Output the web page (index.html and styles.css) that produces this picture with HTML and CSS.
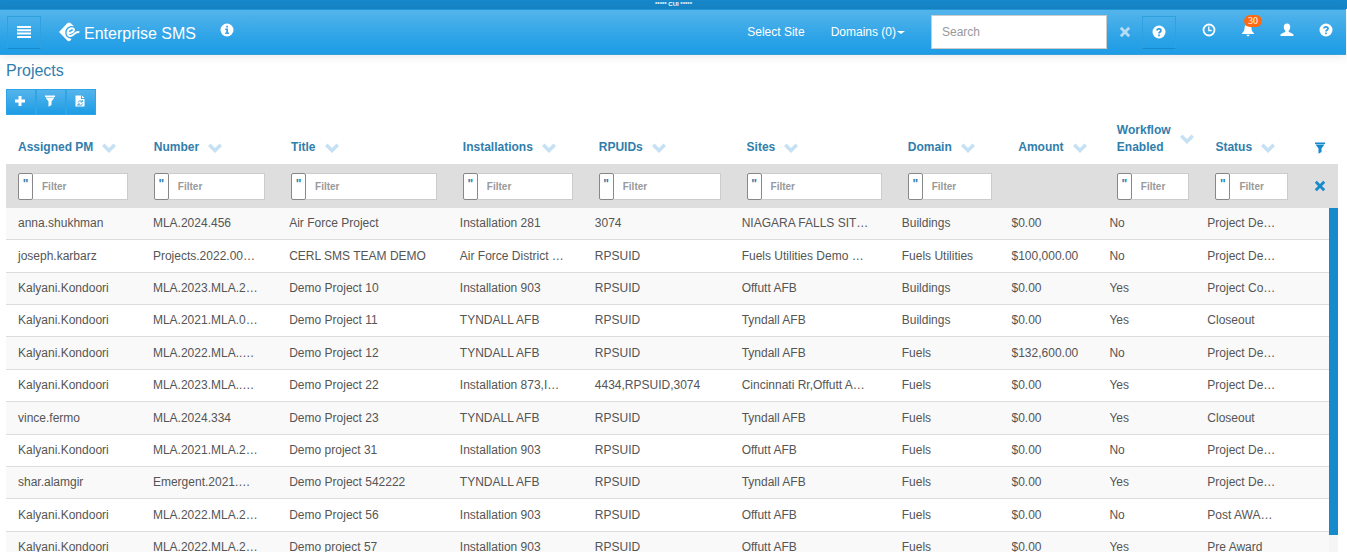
FILE: index.html
```html
<!DOCTYPE html>
<html lang="en">
<head>
<meta charset="utf-8">
<title>Enterprise SMS - Projects</title>
<link rel="stylesheet" href="styles.css">
</head>
<body>
<svg class="sprite" aria-hidden="true">
  <symbol id="i-help" viewBox="0 0 14 14"><circle cx="7" cy="7" r="6.5" fill="currentColor"/><path d="M5 5.6C5 3.2 9 3.2 9 5.5C9 7 7 7 7 8.5M7 9.6v1.6" fill="none" stroke="#2f9ee0" stroke-width="1.7"/></symbol>
  <symbol id="i-info" viewBox="0 0 14 14"><circle cx="7" cy="7" r="6.5" fill="currentColor"/><path d="M6.2 2.8h1.8v1.7H6.200zM5.200 5.600h2.800v4h1v1.400H5.200V9.600h1V7h-1z" fill="#3aa4e3"/></symbol>
  <symbol id="i-clock" viewBox="0 0 14 14"><circle cx="7" cy="7" r="5.500" fill="none" stroke="currentColor" stroke-width="1.800"/><path d="M6.800 3.500v4h3" fill="none" stroke="currentColor" stroke-width="1.300"/></symbol>
  <symbol id="i-bell" viewBox="0 0 14 14"><path d="M6.200 1a.8.8 0 0 1 1.600 0C10 1.600 10.400 3.500 10.500 5.500c.1 2.500 1 3.500 2.500 4.700v.8H1v-.8C2.500 9 3.400 8 3.500 5.500 3.600 3.500 4 1.600 6.200 1zM5.500 11.800h3a1.500 1.500 0 0 1-3 0z" fill="currentColor"/></symbol>
  <symbol id="i-user" viewBox="0 0 14 14"><path d="M7 .5c2.200 0 3.200 1.500 3.200 3.500 0 1.800-.7 3-1.500 3.800v1.200c1.800.8 4.800 1.500 4.800 3.200V13H.5v-.8C.5 10.500 3.500 9.800 5.300 9V7.800C4.500 7 3.800 5.800 3.800 4 3.800 2 4.800.5 7 .5z" fill="currentColor"/></symbol>
  <symbol id="i-remove" viewBox="0 0 12 12"><path d="M2.800.8L6 4 9.200.8l2 2L8 6l3.200 3.200-2 2L6 8l-3.200 3.200-2-2L4 6 .8 2.800z" fill="currentColor"/></symbol>
  <symbol id="i-plus" viewBox="0 0 12 12"><path d="M4.500 1h3v3.500H11v3H7.500V11h-3V7.500H1v-3h3.500z" fill="currentColor"/></symbol>
  <symbol id="i-filter" viewBox="0 0 12 12"><path d="M1 .5h10v1.500H1zM1.500 2.600h9L7.500 6.500V10L4.500 11.800V6.500z" fill="currentColor"/></symbol>
  <symbol id="i-export" viewBox="0 0 12 12"><path d="M1.500.5h5.500v3.500h3.500v7.500h-9z" fill="currentColor"/><path d="M8 .5L10.500 3H8z" fill="currentColor"/><path d="M4 7.500a2.300 2.300 0 0 1 4-.8M8.500 8.500a2.300 2.300 0 0 1-4 1M8.300 5v2H6.500M4 11V9h2" fill="none" stroke="#2f9ee0" stroke-width=".9"/></symbol>
  <symbol id="i-down" viewBox="0 0 14 10"><path d="M2.500.5L7 5l4.500-4.500L14 3 7 10 0 3z" fill="currentColor"/></symbol>
  <symbol id="i-menu" viewBox="0 0 14 12"><path d="M0 0h14v2H0zM0 3.300h14v2H0zM0 6.600h14v2H0zM0 9.900h14v2H0z" fill="currentColor"/></symbol>
</svg>

<div class="banner">***** CUI *****</div>
<header class="navbar">
  <button class="nav-btn" aria-label="Menu"><svg class="menu-icon"><use href="#i-menu"/></svg></button>
  <a class="brand" href="#">
    <svg class="logo" viewBox="0 0 21 20"><path d="M0 10L8.500 1Q10 0 11.500 1L15 4.300C10 3.300 6.500 6 6.300 10.500 6.200 14 8.500 16.300 12.500 16.800L11.500 18.500Q10 20 8.500 18.700z" fill="#fff"/><path d="M9.500 11.200C13 11 15.300 9.200 15 7.500 14.600 5.300 8.800 6 8.600 10.800 8.500 14.500 12.500 15 15 12.200 16.500 10.300 18 9.400 20.300 10.200" fill="none" stroke="#fff" stroke-width="2"/></svg>
    <span class="brand-name">Enterprise SMS</span>
  </a>
  <a class="icon-link info" href="#" aria-label="Information"><svg class="icon"><use href="#i-info"/></svg></a>
  <nav class="nav-links">
    <a href="#">Select Site</a>
    <a href="#">Domains (0)<span class="caret"></span></a>
  </nav>
  <form class="search">
    <input type="text" placeholder="Search" aria-label="Search">
    <button type="button" class="nav-btn clear" aria-label="Clear search"><svg class="icon-s"><use href="#i-remove"/></svg></button>
    <button type="button" class="nav-btn" aria-label="Search help"><svg class="icon"><use href="#i-help"/></svg></button>
  </form>
  <div class="nav-icons">
    <a class="icon-link" href="#" aria-label="Recent"><svg class="icon"><use href="#i-clock"/></svg></a>
    <a class="icon-link" href="#" aria-label="Notifications"><svg class="icon"><use href="#i-bell"/></svg><span class="badge">30</span></a>
    <a class="icon-link" href="#" aria-label="Account"><svg class="icon"><use href="#i-user"/></svg></a>
    <a class="icon-link" href="#" aria-label="Help"><svg class="icon"><use href="#i-help"/></svg></a>
  </div>
</header>

<main>
  <h1>Projects</h1>
  <div class="toolbar">
    <button aria-label="Add"><svg class="icon-s"><use href="#i-plus"/></svg></button>
    <button aria-label="Filter"><svg class="icon-s"><use href="#i-filter"/></svg></button>
    <button aria-label="Export"><svg class="icon-s"><use href="#i-export"/></svg></button>
  </div>

  <table class="grid">
    <colgroup><col class="c-pm"><col class="c-number"><col class="c-title"><col class="c-inst"><col class="c-rpuid"><col class="c-sites"><col class="c-domain"><col class="c-small"><col class="c-small"><col class="c-small"><col class="c-tools"></colgroup>
    <thead>
      <tr class="heads" id="heads"></tr>
      <tr class="filters" id="filters"></tr>
    </thead>
  </table>
  <div class="scroller">
    <table class="grid">
      <colgroup><col class="c-pm"><col class="c-number"><col class="c-title"><col class="c-inst"><col class="c-rpuid"><col class="c-sites"><col class="c-domain"><col class="c-small"><col class="c-small"><col class="c-small"><col class="c-tools"></colgroup>
      <tbody id="rows"></tbody>
    </table>
    <div class="rail"><div class="thumb"></div></div>
  </div>
</main>
<script src="grid.js"></script>
</body>
</html>
```
FILE: grid.js
```js
const columns = ["Assigned PM", "Number", "Title", "Installations", "RPUIDs", "Sites", "Domain", "Amount", "Workflow Enabled", "Status"];
const unfiltered = ["Amount"];
const projects = [
  ["anna.shukhman", "MLA.2024.456", "Air Force Project", "Installation 281", "3074", "NIAGARA FALLS SIT…", "Buildings", "$0.00", "No", "Project De…"],
  ["joseph.karbarz", "Projects.2022.00…", "CERL SMS TEAM DEMO", "Air Force District …", "RPSUID", "Fuels Utilities Demo …", "Fuels Utilities", "$100,000.00", "No", "Project De…"],
  ["Kalyani.Kondoori", "MLA.2023.MLA.2…", "Demo Project 10", "Installation 903", "RPSUID", "Offutt AFB", "Buildings", "$0.00", "Yes", "Project Co…"],
  ["Kalyani.Kondoori", "MLA.2021.MLA.0…", "Demo Project 11", "TYNDALL AFB", "RPSUID", "Tyndall AFB", "Buildings", "$0.00", "Yes", "Closeout"],
  ["Kalyani.Kondoori", "MLA.2022.MLA..…", "Demo Project 12", "TYNDALL AFB", "RPSUID", "Tyndall AFB", "Fuels", "$132,600.00", "No", "Project De…"],
  ["Kalyani.Kondoori", "MLA.2023.MLA..…", "Demo Project 22", "Installation 873,I…", "4434,RPSUID,3074", "Cincinnati Rr,Offutt A…", "Fuels", "$0.00", "Yes", "Project De…"],
  ["vince.fermo", "MLA.2024.334", "Demo Project 23", "TYNDALL AFB", "RPSUID", "Tyndall AFB", "Fuels", "$0.00", "Yes", "Closeout"],
  ["Kalyani.Kondoori", "MLA.2021.MLA.2…", "Demo project 31", "Installation 903", "RPSUID", "Offutt AFB", "Fuels", "$0.00", "No", "Project De…"],
  ["shar.alamgir", "Emergent.2021.…", "Demo Project 542222", "TYNDALL AFB", "RPSUID", "Tyndall AFB", "Fuels", "$0.00", "Yes", "Project De…"],
  ["Kalyani.Kondoori", "MLA.2022.MLA.2…", "Demo Project 56", "Installation 903", "RPSUID", "Offutt AFB", "Fuels", "$0.00", "No", "Post AWA…"],
  ["Kalyani.Kondoori", "MLA.2022.MLA.2…", "Demo project 57", "Installation 903", "RPSUID", "Offutt AFB", "Fuels", "$0.00", "Yes", "Pre Award"]
];

document.getElementById("heads").innerHTML = columns.map(name =>
  `<th scope="col"><div class="head"><a href="#">${name}</a><svg class="sort"><use href="#i-down"/></svg></div></th>`
).join("") + `<th class="tools"><button aria-label="Toggle filters"><svg class="icon-s"><use href="#i-filter"/></svg></button></th>`;

document.getElementById("filters").innerHTML = columns.map(name =>
  unfiltered.includes(name) ? "<td></td>" :
  `<td><div class="filter"><button aria-label="${name} filter mode">"</button><input type="text" placeholder="Filter" aria-label="Filter ${name}"></div></td>`
).join("") + `<td class="tools"><button aria-label="Clear filters"><svg class="icon-s"><use href="#i-remove"/></svg></button></td>`;

document.getElementById("rows").innerHTML = projects.map(row =>
  `<tr>${row.map(value => `<td>${value}</td>`).join("")}<td></td></tr>`
).join("");
```
FILE: styles.css
```css
* { box-sizing: border-box; }

body {
  margin: 0;
  height: 100vh;
  overflow: hidden;
  display: flex;
  flex-direction: column;
  font: 12px/16px "Liberation Sans", Arial, sans-serif;
  color: #555;
  background: #fff;
}

a { color: inherit; text-decoration: none; }
button, input { font: inherit; margin: 0; padding: 0; }
button { border: 0; background: none; color: inherit; display: flex; align-items: center; justify-content: center; }

.sprite { display: none; }
.icon { display: block; width: 14px; height: 14px; }
.icon-s { display: block; width: 12px; height: 12px; }

.banner {
  flex: none;
  height: 9px;
  background: #1787c9;
  color: #fff;
  font-size: 6px;
  line-height: 8px;
  font-weight: bold;
  text-align: center;
}

.navbar {
  flex: none;
  height: 46px;
  margin-right: 1px;
  padding: 0 13px 0 7px;
  display: flex;
  align-items: center;
  color: #fff;
  background: linear-gradient(#54b4eb, #2fa4e7 60%, #1d9ce5);
  border-top: 1px solid #1d95d8;
  border-bottom: 1px solid #3a9fd8;
  box-shadow: 0 1px 10px rgba(0, 0, 0, .1);
}

.nav-btn { width: 34px; height: 33px; border: 1px solid #2fa0e0; border-bottom-color: #178acc; }
.nav-btn.clear { color: #b5dcf5; border-color: transparent; margin-left: 1px; }
.menu-icon { width: 14px; height: 12px; }
.brand { display: flex; align-items: center; gap: 4px; margin-left: 18px; font-size: 16px; line-height: 20px; }
.brand-name { padding-top: 4px; }
.logo { width: 21px; height: 20px; }
.icon-link { position: relative; display: block; }
.info { margin-left: 24px; padding-bottom: 4px; }
.nav-links { margin-left: auto; display: flex; gap: 26px; }
.caret { display: inline-block; margin-left: 1px; vertical-align: middle; border: 4px solid transparent; border-top: 3px solid #fff; border-bottom: 0; }
.search { display: flex; align-items: center; margin-left: 26px; }
.search input { width: 176px; height: 34px; padding: 0 10px; border: 1px solid #ccc; background: #fff; color: #555; }
input::placeholder { color: #999; opacity: 1; }
.nav-icons { display: flex; gap: 25px; margin-left: 26px; padding-bottom: 4px; }
.badge {
  position: absolute;
  left: 3px;
  top: -8px;
  width: 18px;
  height: 12px;
  border-radius: 6px;
  background: #ff6a10;
  font: 10px/12px "Liberation Serif", serif;
  text-align: center;
}

main { flex: 1; min-height: 0; display: flex; flex-direction: column; padding: 6px 9px 0 6px; }
h1 { margin: 0; font-size: 16px; line-height: 20px; font-weight: normal; color: #317eac; }
.toolbar { display: flex; margin-top: 8px; }
.toolbar button {
  width: 30px;
  height: 26px;
  padding: 0 2px 3px 0;
  color: #fff;
  background: linear-gradient(#54b4eb, #1d9ce5);
  border: 1px solid #2fa4e7;
}

.grid { width: 100%; table-layout: fixed; border-collapse: collapse; text-align: left; }
.c-pm, .c-inst { width: 10.2%; }
.c-number { width: 10.3%; }
.c-title { width: 12.9%; }
.c-rpuid { width: 11.1%; }
.c-sites { width: 12.1%; }
.c-domain { width: 8.3%; }
.c-small { width: 7.4%; }
.c-tools { width: 2.7%; }

.heads th { height: 49px; padding: 0 12px 8px; vertical-align: bottom; color: #317eac; line-height: 17px; }
.head { display: flex; align-items: center; gap: 9px; }
.sort { flex: none; width: 14px; height: 10px; color: #c5e1f3; }
.grid .tools { padding-left: 0; padding-right: 0; color: #178acc; }
.tools button { width: 100%; height: 17px; }

.filters { background: #dedede; }
.filters td { height: 44px; padding: 0 14px 0 12px; }
.filter { display: flex; }
.filter button { flex: none; width: 15px; height: 27px; padding-bottom: 5px; border: 1px solid #888; border-radius: 2px; background: #fff; color: #317eac; font-weight: bold; }
.filter input { flex: 1; min-width: 0; height: 27px; padding: 0 9px; border: 1px solid #ccc; border-left: 0; background: #fff; font-size: 10px; font-weight: bold; }

.scroller { flex: 1; min-height: 0; display: flex; align-items: stretch; overflow: hidden; }
.scroller .grid { flex: 1; align-self: flex-start; border-collapse: separate; border-spacing: 0; }
.scroller td { height: 32px; padding: 0 0 1px 12px; border-bottom: 1px solid #ddd; white-space: nowrap; }
.scroller tr:nth-child(odd) td { background: #f9f9f9; }
.scroller tr:nth-child(5n+2) td, .scroller tr:nth-child(5n+5) td { height: 33px; }
.rail { flex: none; width: 9px; background: #f5f5f5; }
.thumb { height: 95%; background: #178acc; }
```
